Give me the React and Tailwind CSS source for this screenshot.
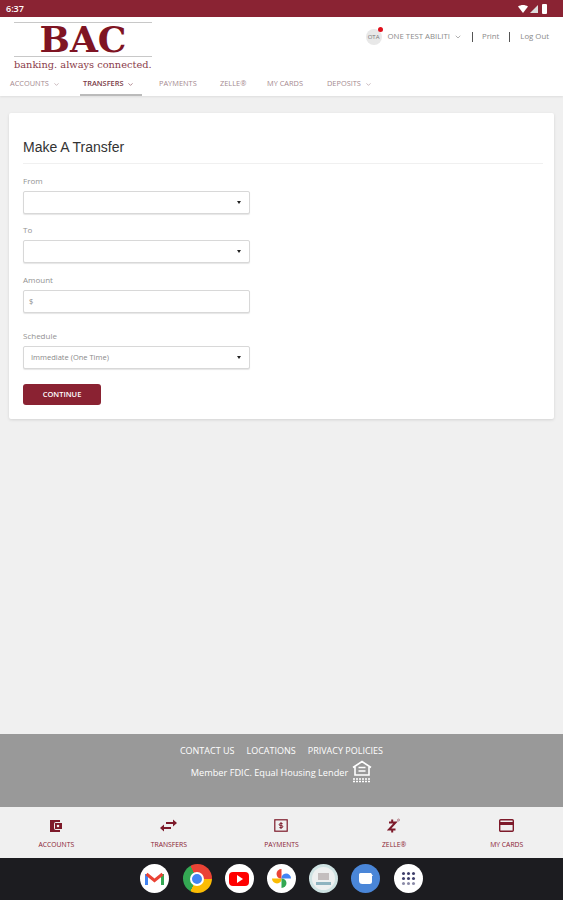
import React from 'react';
import { ChevronDown } from 'lucide-react';

const MAROON = '#8a2232';

const NAV = [
  { label: 'ACCOUNTS', caret: true, w: 'w-[73px]' },
  { label: 'TRANSFERS', caret: true, active: true, w: 'w-[62px] mr-[14px]' },
  { label: 'PAYMENTS', w: 'w-[61px]' },
  { label: 'ZELLE®', w: 'w-[47px]' },
  { label: 'MY CARDS', w: 'w-[60px]' },
  { label: 'DEPOSITS', caret: true, w: 'w-[60px]' },
];

const Caret = () => (
  <span className="ml-auto mr-[8px] h-0 w-0 border-x-[2px] border-t-[3px] border-x-transparent border-t-[#222]" />
);

const Field = ({ label, children, select, className = '' }) => (
  <div className={className}>
    <div className="mb-[4px] text-[8px] leading-[12px] text-[#929292]">{label}</div>
    <div className="flex h-[23px] w-[227px] items-center rounded-[2px] border border-[#d8d8d8] bg-white text-[7.5px] text-[#8a8a8a] shadow-[0_1px_1px_rgba(0,0,0,0.1)]">
      {children}
      {select && <Caret />}
    </div>
  </div>
);

const WalletIcon = () => (
  <svg width="14" height="14" viewBox="0 0 14 14" fill="#7d1a2a">
    <path d="M1 1h10v2H7a2 2 0 0 0-2 2v4a2 2 0 0 0 2 2h4v2H1z" />
    <path fillRule="evenodd" d="M6 4h7v6H6zm3 1.700a1.300 1.300 0 1 0 0 2.600 1.300 1.300 0 0 0 0-2.600z" />
  </svg>
);

const TransferIcon = () => (
  <svg width="17" height="13" viewBox="0 0 17 13" fill="#7d1a2a">
    <path d="M6 3h7V0.500L17 4l-4 3.500V5H6z" />
    <path d="M11 8H4V5.500L0 9l4 3.500V10h7z" />
  </svg>
);

const BillIcon = () => (
  <svg width="14" height="13" viewBox="0 0 14 13" fill="none" stroke="#7d1a2a" strokeWidth="1.2">
    <rect x="0.8" y="0.8" width="12.4" height="11.4" />
    <path d="M7 3v7M8.600 4.600H6.200a1 1 0 0 0 0 2h1.600a1 1 0 0 1 0 2H5.400" strokeWidth="1" />
  </svg>
);

const ZelleIcon = () => (
  <svg width="14" height="16" viewBox="0 0 14 16" fill="none" stroke="#7d1a2a" strokeWidth="2">
    <path d="M2 4.500h6.500L2 11.500h6.500M5.200 1.500v3M5.200 11.500v3" />
    <circle cx="11.500" cy="2" r="1" strokeWidth="0.5" />
  </svg>
);

const CardIcon = () => (
  <svg width="15" height="13" viewBox="0 0 15 13" fill="none" stroke="#7d1a2a" strokeWidth="1.4">
    <rect x="0.7" y="0.7" width="13.6" height="11.6" rx="1" />
    <path d="M0.7 4.500h13.6" strokeWidth="3" />
  </svg>
);

const TABS = [
  { label: 'ACCOUNTS', icon: <WalletIcon /> },
  { label: 'TRANSFERS', icon: <TransferIcon /> },
  { label: 'PAYMENTS', icon: <BillIcon /> },
  { label: 'ZELLE®', icon: <ZelleIcon /> },
  { label: 'MY CARDS', icon: <CardIcon /> },
];

const HousingIcon = () => (
  <svg width="20" height="23" viewBox="0 0 20 23" fill="none" stroke="#fff">
    <path d="M1 7.500 10 1.500l9 6M3 7v8h14V7" strokeWidth="1.6" />
    <path d="M6.500 7.500h7M6.500 11h7" strokeWidth="1.6" />
    <path d="M1 19h18M1 21.500h18" strokeWidth="1.4" strokeDasharray="2 1" />
  </svg>
);

const DockIcon = ({ children, bg = 'bg-white' }) => (
  <div className={`flex h-[29px] w-[29px] items-center justify-center overflow-hidden rounded-full ${bg}`}>{children}</div>
);

const Dock = () => (
  <div className="flex h-[42px] items-center justify-center gap-[13.2px] bg-[#1c1c20] pb-[1px]">
    <DockIcon>
      <svg width="19" height="15" viewBox="0 0 19 15" fill="none">
        <path d="M1.500 14V3" stroke="#4285f4" strokeWidth="3" />
        <path d="M17.500 14V3" stroke="#34a853" strokeWidth="3" />
        <path d="M1.500 3l8 6.500 8-6.500" stroke="#ea4335" strokeWidth="3" />
      </svg>
    </DockIcon>
    <div
      className="flex h-[29px] w-[29px] items-center justify-center rounded-full"
      style={{ background: 'conic-gradient(from -30deg, #ea4335 0 120deg, #fbbc04 120deg 240deg, #34a853 240deg 360deg)' }}
    >
      <div className="h-[14px] w-[14px] rounded-full border-[2px] border-white bg-[#4285f4]" />
    </div>
    <DockIcon>
      <div className="flex h-[14px] w-[20px] items-center justify-center rounded-[4px] bg-[#f00]">
        <div className="ml-[1px] h-0 w-0 border-y-[4px] border-l-[6px] border-y-transparent border-l-white" />
      </div>
    </DockIcon>
    <DockIcon>
      <svg width="21" height="21" viewBox="0 0 21 21">
        <path d="M10.500 10.500V1a5 5 0 0 0-5 5 5 5 0 0 0 5 4.500z" fill="#fbbc04" transform="rotate(-90 10.500 10.500)" />
        <path d="M10.500 10.500V1a5 5 0 0 0-5 5 5 5 0 0 0 5 4.500z" fill="#ea4335" />
        <path d="M10.500 10.500V1a5 5 0 0 0-5 5 5 5 0 0 0 5 4.500z" fill="#4285f4" transform="rotate(90 10.500 10.500)" />
        <path d="M10.500 10.500V1a5 5 0 0 0-5 5 5 5 0 0 0 5 4.500z" fill="#34a853" transform="rotate(180 10.500 10.500)" />
      </svg>
    </DockIcon>
    <DockIcon bg="bg-[#cfe3e3]">
      <div className="flex h-[23px] w-[23px] flex-col items-center justify-center gap-[2px] rounded-full bg-[#eef0f0]">
        <div className="h-[7px] w-[11px] bg-[#c4bfbf]" />
        <div className="h-[3px] w-[15px] bg-[#8fb4c0]" />
      </div>
    </DockIcon>
    <DockIcon bg="bg-[#4a86d8]">
      <svg width="16" height="14" viewBox="0 0 16 14" fill="#fff">
        <path d="M1 2.500A1.500 1.500 0 0 1 2.500 1H13l2 3h-1v5.500a2.500 2.500 0 0 1-2.500 2.500h-7A3.500 3.500 0 0 1 1 8.500z" />
      </svg>
    </DockIcon>
    <DockIcon>
      <div className="grid grid-cols-3 gap-[2px]">
        {Array.from({ length: 9 }).map((_, i) => (
          <span key={i} className={`h-[3px] w-[3px] rounded-full ${i < 6 ? 'bg-[#3f3f6b]' : 'bg-[#8b8ba8]'}`} />
        ))}
      </div>
    </DockIcon>
  </div>
);

export default function App() {
  return (
    <div className="flex h-[900px] w-[563px] flex-col overflow-hidden bg-[#f0f0f0] font-['Open_Sans',sans-serif]">
      {/* status bar */}
      <div className="flex h-[17px] items-center justify-between bg-[#8a2333] pl-[6px] pr-[16px] text-[9px] font-semibold text-white">
        <span>6:37</span>
        <div className="flex items-center gap-[2px]">
          <svg width="10" height="8" viewBox="0 0 10 8" fill="#fff"><path d="M0 1.500C3-.5 7-.5 10 1.500L5 8z" /></svg>
          <svg width="8" height="8" viewBox="0 0 8 8" fill="#ddd"><path d="M8 0v8H0z" /></svg>
          <div className="ml-[2px] h-[10px] w-[5px] rounded-[1px] bg-white" />
        </div>
      </div>

      {/* header */}
      <header className="h-[79px] bg-white shadow-[0_1px_2px_rgba(0,0,0,0.08)]">
        <div className="flex h-[51px] items-start justify-between pl-[14px] pr-[14px]">
          <div className="mt-[5px] w-[138px]">
            <div className="h-[1px] bg-[#c8c8c8]" />
            <div className="h-[33px] text-center font-['DejaVu_Serif',serif] text-[36px] font-bold leading-[33px] text-[#7f1423]">
              BAC
            </div>
            <div className="h-[1px] bg-[#c8c8c8]" />
            <div className="mt-[2px] whitespace-nowrap font-['DejaVu_Serif',serif] text-[9.8px] leading-[12px] text-[#8a3a48]">
              banking. always connected.
            </div>
          </div>
          <div className="mt-[12px] flex items-center text-[7.8px] text-[#8a8a8a]">
            <div className="relative flex h-[16px] w-[16px] items-center justify-center rounded-full bg-[#e8e8e8] text-[6px] text-[#777]">
              OTA
              <span className="absolute right-[-1px] top-[-2px] h-[5px] w-[5px] rounded-full bg-[#e0101c]" />
            </div>
            <span className="ml-[6px]">ONE TEST ABILITI</span>
            <ChevronDown size={8} className="ml-[4px]" />
            <span className="ml-[10px] h-[10px] w-[1px] bg-[#555]" />
            <span className="ml-[9px]">Print</span>
            <span className="ml-[10px] h-[10px] w-[1px] bg-[#555]" />
            <span className="ml-[10px]">Log Out</span>
          </div>
        </div>
        <nav className="flex h-[28px] pl-[7px] pt-[2px]">
          {NAV.map((n) => (
            <div
              key={n.label}
              className={`${n.w} flex h-[26px] items-center border-b-2 pl-[3px] pt-[4px] text-[7.4px] ${
                n.active ? 'border-[#bbb] font-semibold text-[#7a3a46]' : 'border-transparent text-[#a58a90]'
              }`}
            >
              {n.label}
              {n.caret && <ChevronDown size={7} className="ml-[4px]" />}
            </div>
          ))}
        </nav>
      </header>

      {/* main */}
      <main className="flex-1 px-[9px] pt-[17px]">
        <section className="h-[306px] rounded-[2px] bg-white pl-[14px] pr-[11px] pt-[23px] shadow-[0_1px_3px_rgba(0,0,0,0.12)]">
          <h1 className="border-b border-[#f0f0f0] pb-[5px] font-['Liberation_Sans',sans-serif] text-[14px] leading-[22px] text-[#333]">
            Make A Transfer
          </h1>
          <Field label="From" select className="mt-[11px]" />
          <Field label="To" select className="mt-[10px]" />
          <Field label="Amount" className="mt-[11px]">
            <span className="pl-[5px]">$</span>
          </Field>
          <Field label="Schedule" select className="mt-[17px]">
            <span className="pl-[7px]">Immediate (One Time)</span>
          </Field>
          <button className="mt-[15px] flex h-[21px] w-[78px] items-center justify-center rounded-[3px] bg-[#8a2232] text-[7.5px] font-semibold text-white">
            CONTINUE
          </button>
        </section>
      </main>

      {/* footer */}
      <footer className="flex h-[73px] flex-col items-center bg-[#999999] pt-[10px] text-white">
        <div className="flex gap-[12px] text-[9px] leading-[13px]">
          <span>CONTACT US</span>
          <span>LOCATIONS</span>
          <span>PRIVACY POLICIES</span>
        </div>
        <div className="mt-[3px] flex items-center gap-[4px] text-[9.2px]">
          <span className="mt-[3px]">Member FDIC. Equal Housing Lender</span>
          <HousingIcon />
        </div>
      </footer>

      {/* bottom tabs */}
      <div className="grid h-[51px] grid-cols-5 bg-[#f0f0f0]" style={{ color: MAROON }}>
        {TABS.map((t) => (
          <div key={t.label} className="flex flex-col items-center pt-[10px]">
            <div className="flex h-[17px] items-center">{t.icon}</div>
            <div className="mt-[6px] text-[6.8px] leading-[10px]">{t.label}</div>
          </div>
        ))}
      </div>

      <Dock />
    </div>
  );
}
